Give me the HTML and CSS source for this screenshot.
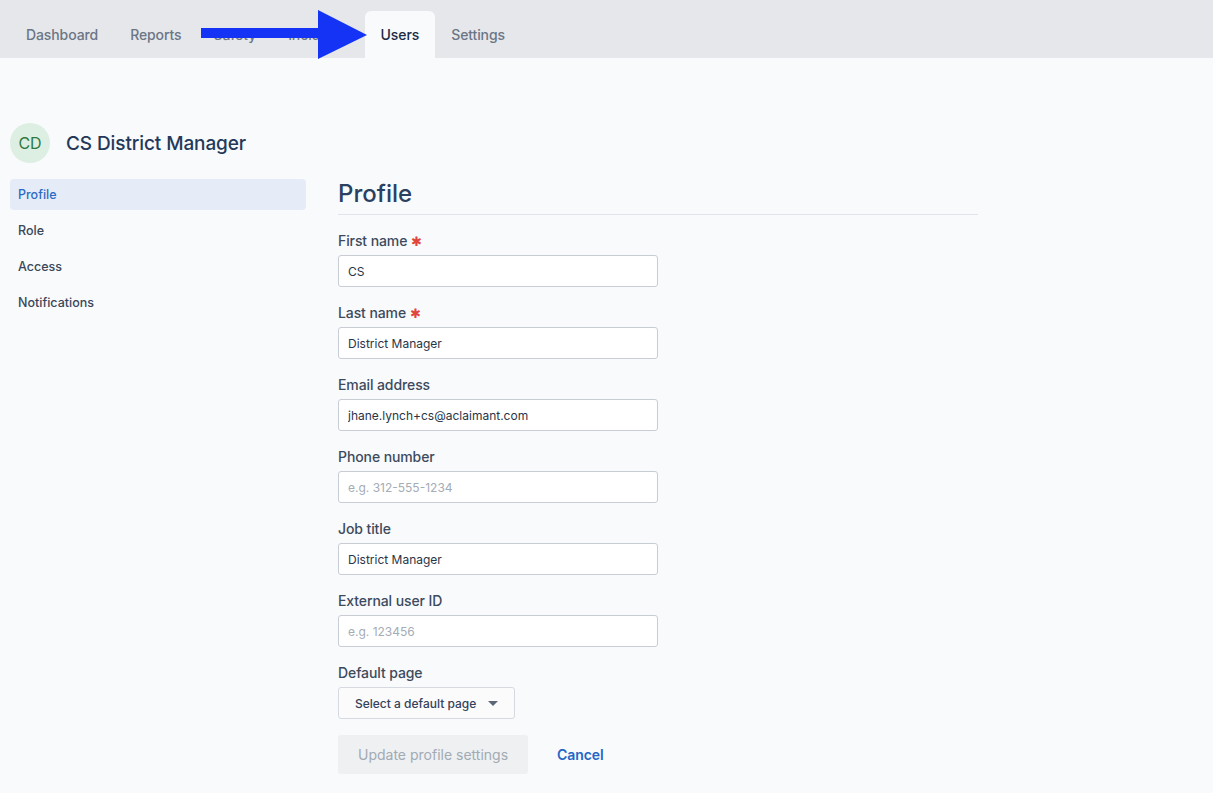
FILE: index.html
```html
<!DOCTYPE html>
<html lang="en">
<head>
  <meta charset="UTF-8">
  <title>CS District Manager</title>
  <link rel="stylesheet" href="styles.css">
</head>
<body>
  <nav class="tabs">
    <a class="tab">Dashboard</a>
    <a class="tab">Reports</a>
    <a class="tab">Safety</a>
    <a class="tab">Incidents</a>
    <a class="tab active">Users</a>
    <a class="tab">Settings</a>
    <svg class="arrow" width="175" height="52" viewBox="0 0 175 52">
      <rect x="0" y="18" width="122" height="10" fill="#1433f5"/>
      <polygon points="117,0 117,49 166,25" fill="#1433f5"/>
    </svg>
  </nav>

  <div class="page">
    <div class="user-head">
      <div class="avatar">CD</div>
      <h1>CS District Manager</h1>
    </div>

    <div class="layout">
      <ul class="side-nav">
        <li class="active">Profile</li>
        <li>Role</li>
        <li>Access</li>
        <li>Notifications</li>
      </ul>

      <form class="profile">
        <h2>Profile</h2>

        <div class="field">
          <label>First name <span class="req">✱</span></label>
          <input type="text" value="CS">
        </div>
        <div class="field">
          <label>Last name <span class="req">✱</span></label>
          <input type="text" value="District Manager">
        </div>
        <div class="field">
          <label>Email address</label>
          <input type="text" value="jhane.lynch+cs@aclaimant.com">
        </div>
        <div class="field">
          <label>Phone number</label>
          <input type="text" placeholder="e.g. 312-555-1234">
        </div>
        <div class="field">
          <label>Job title</label>
          <input type="text" value="District Manager">
        </div>
        <div class="field">
          <label>External user ID</label>
          <input type="text" placeholder="e.g. 123456">
        </div>
        <div class="field">
          <label>Default page</label>
          <button type="button" class="select">Select a default page <span class="caret"></span></button>
        </div>

        <div class="actions">
          <button type="button" class="submit" disabled>Update profile settings</button>
          <a class="cancel">Cancel</a>
        </div>
      </form>
    </div>
  </div>
</body>
</html>
```

FILE: styles.css
```css
body {
  margin: 0;
  font-family: Inter, 'Liberation Sans', sans-serif;
  background: #f8fafc;
  color: #2a3b52;
}

.tabs {
  position: relative;
  display: flex;
  align-items: flex-end;
  height: 58px;
  padding-left: 10px;
  background: #e5e7eb;
}

.tab {
  display: block;
  height: 47px;
  line-height: 48px;
  padding: 0 16px;
  font-size: 14px;
  font-weight: 500;
  letter-spacing: -0.1px;
  color: #6b7585;
  border-radius: 6px 6px 0 0;
}

.tab.active {
  background: #f8fafc;
  color: #1c2b45;
}

.arrow {
  position: absolute;
  left: 201px;
  top: 10px;
}

.page {
  padding: 65px 10px 0;
}

.user-head {
  display: flex;
  align-items: center;
  gap: 16px;
}

.avatar {
  width: 40px;
  height: 40px;
  border-radius: 50%;
  background: #dcefe2;
  color: #2f7a3f;
  font-size: 16px;
  display: flex;
  align-items: center;
  justify-content: center;
}

h1 {
  margin: 0;
  font-size: 19px;
  font-weight: 500;
  letter-spacing: -0.1px;
  color: #23395a;
}

.layout {
  display: flex;
  gap: 32px;
  margin-top: 16px;
}

.side-nav {
  list-style: none;
  margin: 0;
  padding: 0;
  width: 296px;
}

.side-nav li {
  height: 31px;
  line-height: 31px;
  padding: 0 8px;
  margin-bottom: 5px;
  font-size: 12.5px;
  font-weight: 500;
  color: #3a4759;
  border-radius: 4px;
}

.side-nav li.active {
  background: #e5ecf7;
  color: #2c6ac5;
}

.profile {
  width: 640px;
}

h2 {
  margin: 0 0 17px;
  padding-bottom: 6px;
  font-size: 24px;
  font-weight: 500;
  color: #2a4061;
  border-bottom: 1px solid #e1e4e8;
  line-height: 29px;
}

.field {
  margin-bottom: 17px;
}

.field label {
  display: block;
  height: 17px;
  font-size: 14px;
  font-weight: 500;
  letter-spacing: -0.1px;
  color: #3d4a5c;
  margin-bottom: 6px;
  line-height: 17px;
}

.req {
  color: #e0463c;
  font-size: 13px;
  line-height: 1;
}

.field input {
  display: block;
  box-sizing: border-box;
  width: 320px;
  height: 32px;
  padding: 0 9px;
  border: 1px solid #c8cdd4;
  border-radius: 3px;
  background: #fff;
  font-family: inherit;
  font-size: 12px;
  color: #2a3547;
}

.field input::placeholder {
  color: #a4acb6;
}

.select {
  box-sizing: border-box;
  height: 32px;
  padding: 0 16px;
  border: 1px solid #d6dae0;
  border-radius: 3px;
  background: #fbfbfc;
  font-family: inherit;
  font-size: 12px;
  font-weight: 500;
  color: #33425a;
  display: flex;
  align-items: center;
  gap: 12px;
}

.caret {
  width: 0;
  height: 0;
  border-left: 5px solid transparent;
  border-right: 5px solid transparent;
  border-top: 5px solid #5b6676;
}

.actions {
  display: flex;
  align-items: center;
  gap: 29px;
  margin-top: -1px;
}

.submit {
  height: 39px;
  padding: 0 20px;
  border: none;
  border-radius: 3px;
  background: #eef0f2;
  color: #a2aab4;
  font-family: inherit;
  font-size: 14px;
}

.cancel {
  font-size: 14px;
  font-weight: 600;
  letter-spacing: -0.1px;
  color: #2565c6;
}
```
